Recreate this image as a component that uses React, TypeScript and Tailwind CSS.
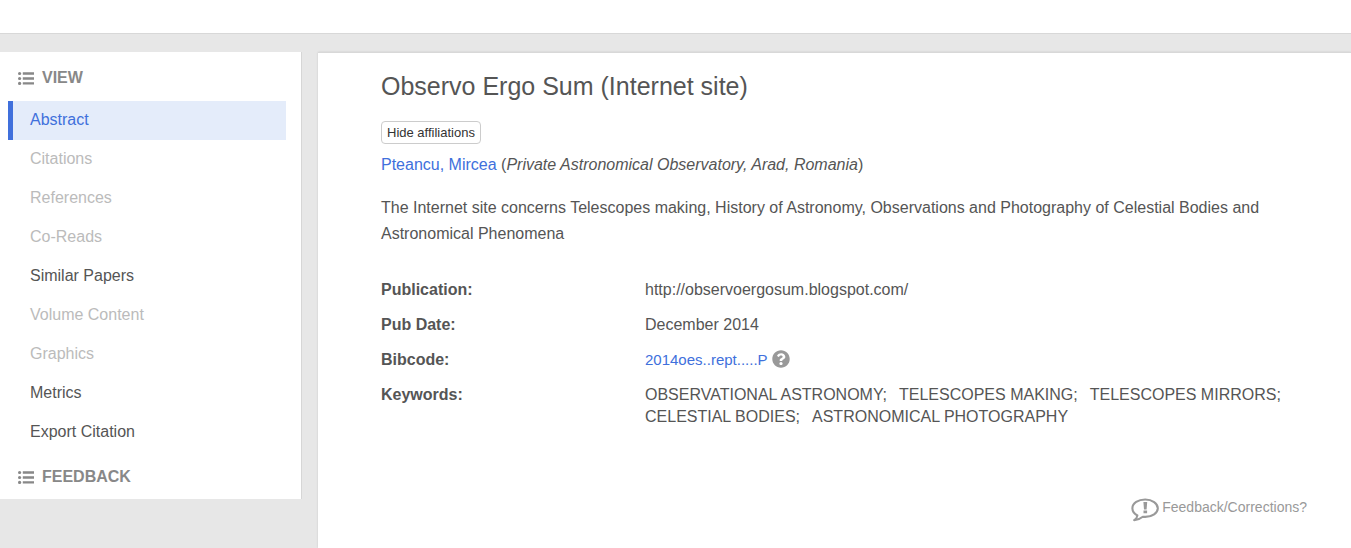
import { FaQuestionCircle } from "react-icons/fa";
import clsx from "clsx";

const views = [
  { label: "Abstract", state: "active" },
  { label: "Citations", state: "disabled" },
  { label: "References", state: "disabled" },
  { label: "Co-Reads", state: "disabled" },
  { label: "Similar Papers", state: "default" },
  { label: "Volume Content", state: "disabled" },
  { label: "Graphics", state: "disabled" },
  { label: "Metrics", state: "default" },
  { label: "Export Citation", state: "default" },
];

const keywordLines = [
  ["OBSERVATIONAL ASTRONOMY;", "TELESCOPES MAKING;", "TELESCOPES MIRRORS;"],
  ["CELESTIAL BODIES;", "ASTRONOMICAL PHOTOGRAPHY"],
];

function ListIcon() {
  return (
    <svg viewBox="0 0 16 14" className="h-3.5 w-4 shrink-0" fill="currentColor" aria-hidden="true">
      <circle cx="1.6" cy="2.5" r="1.6" />
      <circle cx="1.6" cy="7.5" r="1.6" />
      <circle cx="1.6" cy="12.4" r="1.6" />
      <path d="M4.800 1.300h11.200v2.400H4.800zM4.800 6.300h11.200v2.400H4.800zM4.800 11.200h11.200v2.400H4.800z" />
    </svg>
  );
}

function SpeechIcon() {
  return (
    <svg viewBox="0 0 28 24" className="mt-px h-6 w-7 shrink-0" fill="none" aria-hidden="true">
      <path
        d="M14.2 1.500C7.200 1.500 1.400 5.200 1.400 10.200c0 3.200 2 5.700 5 7.300-.2 1.900-1.400 3.400-3.200 4.700 3.700-.3 6.300-1.600 8.600-3.500.8.1 1.600.2 2.400.2 7 0 12.600-3.900 12.600-8.700S21.200 1.500 14.200 1.500z"
        stroke="#999"
        strokeWidth="2.1"
        strokeLinejoin="round"
      />
      <path d="M12.400 4h3.800l-.6 7.400h-2.600zM12.500 12.500h3.600v2.800h-3.600z" fill="#999" />
    </svg>
  );
}

function SectionTitle({ children }: { children: string }) {
  return (
    <h2 className="flex items-center gap-2 pl-4.5 text-[16px] leading-5 font-bold text-[#888]">
      <ListIcon />
      {children}
    </h2>
  );
}

function Sidebar() {
  return (
    <aside className="w-[302px] shrink-0 self-start border-r border-[#d6d6d6] bg-white pt-4 pb-3">
      <SectionTitle>VIEW</SectionTitle>
      <nav className="mt-[13px] mr-[15px] mb-[15px] ml-2">
        {views.map((v) => (
          <a
            key={v.label}
            href="#"
            aria-disabled={v.state === "disabled"}
            className={clsx(
              "block border-l-5 pt-[7px] pb-2 pl-[17px] text-[16px] leading-6",
              v.state === "active" && "border-[#4070dc] bg-[#e4ecfa] text-[#4070dc]",
              v.state === "disabled" && "border-transparent text-[#bbb]",
              v.state === "default" && "border-transparent text-[#555]",
            )}
          >
            {v.label}
          </a>
        ))}
      </nav>
      <SectionTitle>FEEDBACK</SectionTitle>
    </aside>
  );
}

function Details() {
  return (
    <dl className="mt-8 grid grid-cols-[264px_1fr] gap-y-[13px] text-[16px] leading-[22px]">
      <dt className="font-bold">Publication:</dt>
      <dd>http://observoergosum.blogspot.com/</dd>
      <dt className="font-bold">Pub Date:</dt>
      <dd>December 2014</dd>
      <dt className="font-bold">Bibcode:</dt>
      <dd className="flex items-start gap-1">
        <a href="#" className="text-[15px] text-[#4070dc]">
          2014oes..rept.....P
        </a>
        <FaQuestionCircle className="mt-px size-[18px] text-[#999]" />
      </dd>
      <dt className="font-bold">Keywords:</dt>
      <dd>
        {keywordLines.map((line) => (
          <div key={line[0]} className="flex flex-wrap gap-x-3">
            {line.map((k) => (
              <span key={k}>{k}</span>
            ))}
          </div>
        ))}
      </dd>
    </dl>
  );
}

export default function App() {
  return (
    <div className="flex min-h-screen flex-col bg-[#e7e7e7] font-['Liberation_Sans',Arial,sans-serif] text-[#555]">
      <header className="h-[34px] border-b border-[#d8d8d8] bg-white" />
      <div className="flex grow gap-4 pt-[18px]">
        <Sidebar />
        <main className="min-w-0 grow border-t border-[#d8d8d8] bg-white pt-[17px] pr-11 pl-[63px] shadow-[0_0_2px_rgba(0,0,0,0.12)]">
          <h1 className="text-[25px] leading-8">Observo Ergo Sum (Internet site)</h1>
          <button
            type="button"
            className="mt-[19px] block rounded border border-[#ccc] px-[5px] text-[13px] leading-[21px] text-[#333]"
          >
            Hide affiliations
          </button>
          <p className="mt-[9px] text-[16px] leading-6">
            <a href="#" className="text-[#4070dc]">
              Pteancu, Mircea
            </a>{" "}
            (<em>Private Astronomical Observatory, Arad, Romania</em>)
          </p>
          <p className="mt-[18px] text-[16px] leading-[26px]">
            The Internet site concerns Telescopes making, History of Astronomy, Observations and Photography of
            Celestial Bodies and Astronomical Phenomena
          </p>
          <Details />
          <div className="mt-[69px] flex justify-end">
            <a href="#" className="flex gap-[3px] text-[14px] leading-5 text-[#999]">
              <SpeechIcon />
              Feedback/Corrections?
            </a>
          </div>
        </main>
      </div>
    </div>
  );
}
